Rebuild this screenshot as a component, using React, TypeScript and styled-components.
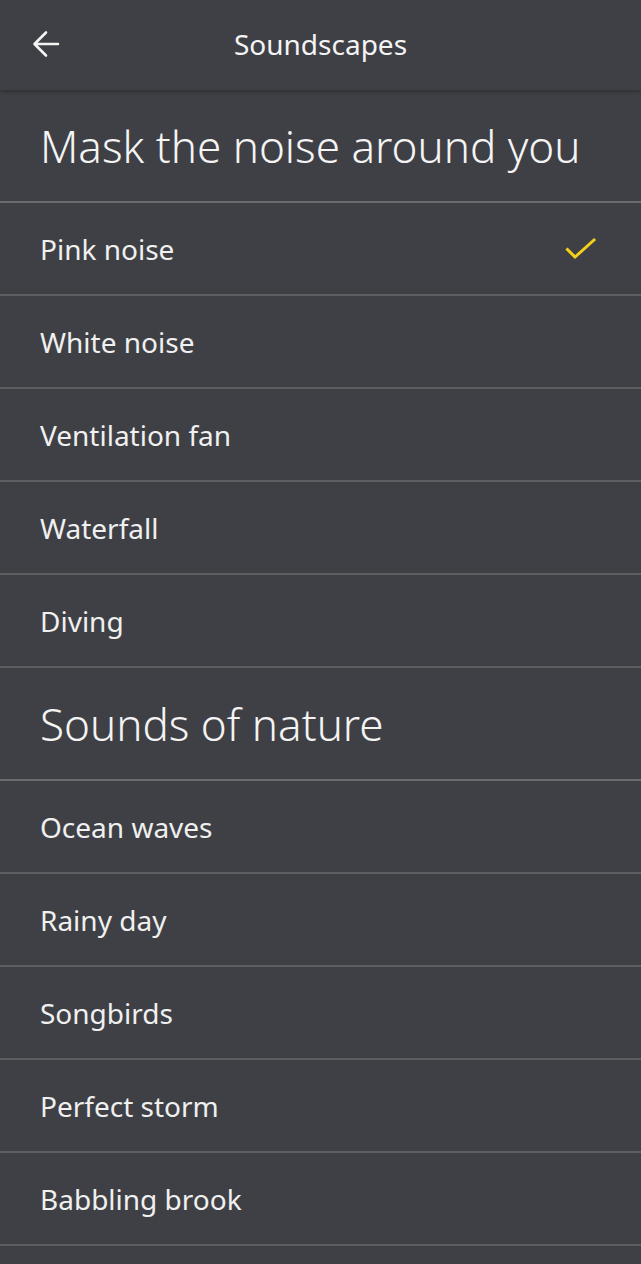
import { createGlobalStyle, styled } from 'styled-components'

const GlobalStyle = createGlobalStyle`
  html, body {
    margin: 0;
    padding: 0;
    background: #3f4045;
  }
  body {
    font-family: "Noto Sans", "Open Sans", sans-serif;
    color: #f2f2f2;
  }
`

const Page = styled.div`
  width: 641px;
  min-height: 1264px;
  background: #3f4045;
`

const Header = styled.header`
  position: relative;
  height: 90px;
  display: flex;
  align-items: center;
  justify-content: center;
  box-shadow: 0 2px 4px rgba(0, 0, 0, 0.25);
  z-index: 1;
`

const BackButton = styled.button`
  position: absolute;
  left: 30px;
  top: 28px;
  width: 32px;
  height: 32px;
  padding: 0;
  border: none;
  background: transparent;
  display: flex;
  align-items: center;
  justify-content: center;
`

const HeaderTitle = styled.h1`
  margin: 0 0 2px;
  font-size: 28px;
  font-weight: 400;
  color: #f4f4f4;
`

const List = styled.ul`
  list-style: none;
  margin: 0;
  padding: 0;
`

const SectionTitle = styled.li`
  height: 111px;
  display: flex;
  align-items: center;
  padding: 0 40px;
  font-size: 44px;
  font-weight: 300;
  color: #f4f4f4;
  border-bottom: 2px solid #6b6c70;
`

const Row = styled.li`
  height: 91px;
  display: flex;
  align-items: center;
  justify-content: space-between;
  padding: 0 44px 0 40px;
  font-size: 28px;
  font-weight: 400;
  color: #f0f0f0;
  border-bottom: 2px solid #5d5e62;
`

const BackArrow = () => (
  <svg width="30" height="30" viewBox="0 0 30 30" fill="none">
    <path d="M27 15H4M15 3.5L3.5 15L15 26.5" stroke="#f4f4f4" strokeWidth="2.6" strokeLinecap="round" strokeLinejoin="round" />
  </svg>
)

const Check = () => (
  <svg width="32" height="24" viewBox="0 0 32 24" fill="none">
    <path d="M2.5 12.5L10 20L29 3" stroke="#f4cf1b" strokeWidth="3" strokeLinecap="square" />
  </svg>
)

const sections = [
  {
    title: 'Mask the noise around you',
    items: ['Pink noise', 'White noise', 'Ventilation fan', 'Waterfall', 'Diving'],
  },
  {
    title: 'Sounds of nature',
    items: ['Ocean waves', 'Rainy day', 'Songbirds', 'Perfect storm', 'Babbling brook'],
  },
]

const selected = 'Pink noise'

export default function App (): JSX.Element {
  return (
    <Page>
      <GlobalStyle />
      <Header>
        <BackButton aria-label="Back"><BackArrow /></BackButton>
        <HeaderTitle>Soundscapes</HeaderTitle>
      </Header>
      <List>
        {sections.map(section => (
          <>
            <SectionTitle key={section.title}>{section.title}</SectionTitle>
            {section.items.map(item => (
              <Row key={item}>
                <span>{item}</span>
                {item === selected && <Check />}
              </Row>
            ))}
          </>
        ))}
      </List>
    </Page>
  )
}
